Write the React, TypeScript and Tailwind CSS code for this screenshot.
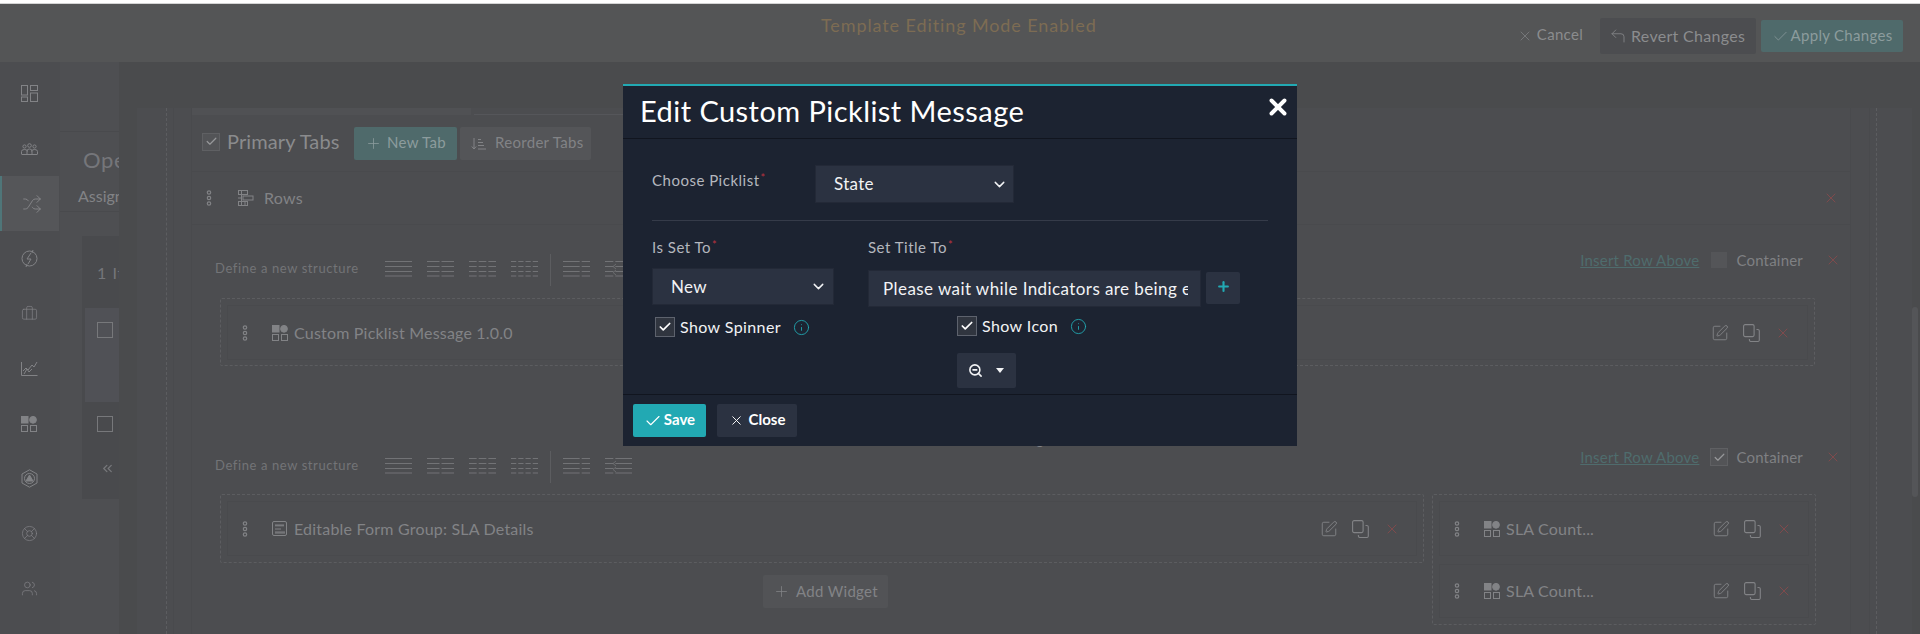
import React from "react";
import { X, Check, Plus, ChevronDown, SquarePen, Info, ZoomOut, ChevronsLeft, Shuffle, LifeBuoy, Users, Briefcase, CornerUpLeft } from "lucide-react";

const RED = "text-[#834a4c]";

const Handle = () => (
  <svg width="6" height="16" viewBox="0 0 6 16" fill="none" stroke="#828386" strokeWidth="1.2" className="shrink-0">
    <circle cx="3" cy="2.5" r="1.7" />
    <circle cx="3" cy="8" r="1.7" />
    <circle cx="3" cy="13.5" r="1.7" />
  </svg>
);

const WidgetIcon = ({ c = "#828386" }: { c?: string }) => (
  <svg width="16" height="16" viewBox="0 0 16 16" fill="none" stroke={c} strokeWidth="1" className="shrink-0">
    <rect x="0.5" y="0.5" width="6.5" height="6.5" fill={c} />
    <circle cx="12" cy="3.8" r="3.4" fill={c} />
    <rect x="0.5" y="9.5" width="6" height="6" />
    <rect x="9.5" y="9.5" width="6" height="6" />
  </svg>
);

const CopyIcon = () => (
  <svg width="17" height="18" viewBox="0 0 17 18" fill="none" stroke="#828386" strokeWidth="1.1" className="shrink-0">
    <rect x="0.6" y="0.6" width="10.5" height="12" rx="1.5" />
    <path d="M13.5 5.5h1.2a1.6 1.6 0 0 1 1.6 1.6v8.8a1.6 1.6 0 0 1-1.6 1.6H8a1.6 1.6 0 0 1-1.6-1.6V15" />
  </svg>
);

const Struct = ({ cols, kind }: { cols: number[]; kind?: "arrowL" }) => {
  const total = 27;
  const gap = 2;
  const sum = cols.reduce((a, b) => a + b, 0);
  const avail = total - gap * (cols.length - 1);
  let x = 0;
  const segs = cols.map((c) => {
    const w = (c / sum) * avail;
    const s = { x, w };
    x += w + gap;
    return s;
  });
  return (
    <svg width="27" height="16" viewBox="0 0 27 16" className="shrink-0">
      {[0.5, 5.5, 10.5, 15].map((y) => (
        <g key={y}>
          {segs.map((s, i) => (
            <rect key={i} x={s.x} y={y - 0.5} width={s.w} height="1" fill="#727376" />
          ))}
        </g>
      ))}
      {kind === "arrowL" && <path d="M11 3l-3 2.5 3 2.5M11 9l-3 2.5 3 2.5" stroke="#727376" fill="none" strokeWidth="0.8" />}
    </svg>
  );
};

const Actions = () => (
  <div className="flex items-center gap-[14px] text-[#828386]">
    <SquarePen size={18} strokeWidth={1.25} />
    <CopyIcon />
    <X size={16} strokeWidth={1.4} className={`ml-[1px] ${RED}`} />
  </div>
);

const GhostCheck = ({ checked }: { checked?: boolean }) =>
  checked ? (
    <div className="w-[18px] h-[18px] bg-[#535457] border border-[#5f6063] flex items-center justify-center shrink-0">
      <Check size={13} strokeWidth={2.2} className="text-[#97989a]" />
    </div>
  ) : (
    <div className="w-[16px] h-[16px] bg-[#545558] shrink-0" />
  );

const DefineRow = ({ checked }: { checked?: boolean }) => (
  <div className="flex items-start h-[32px] ml-[23px] mr-[9px]">
    <span className="mt-[5px] text-[13px] tracking-[0.6px] text-[#737477] w-[170px] whitespace-nowrap leading-[18px]">Define a new structure</span>
    <div className="flex items-center gap-[15px] mt-[7px]">
      <Struct cols={[1]} />
      <Struct cols={[1, 1]} />
      <Struct cols={[1, 1, 1]} />
      <Struct cols={[1, 1, 1, 1]} />
    </div>
    <div className="w-px h-[32px] bg-[#5c5d60] mx-[12px]" />
    <div className="flex items-center gap-[15px] mt-[7px]">
      <Struct cols={[2, 1]} />
      <Struct cols={[1, 2]} kind="arrowL" />
    </div>
    <div className="ml-auto flex items-center -mt-[2px] h-[16px] whitespace-nowrap text-[15px] tracking-[0.2px]">
      <span className="underline text-[#4f6c6d]">Insert Row Above</span>
      <div className="ml-[11px] w-[18px] flex justify-center"><GhostCheck checked={checked} /></div>
      <span className="ml-[8px] text-[#7f8083]">Container</span>
      <X size={16} strokeWidth={1.4} className={`ml-[22px] ${RED}`} />
    </div>
  </div>
);

const WidgetRow = ({ icon, label, h = "h-[55px]" }: { icon: React.ReactNode; label: string; h?: string }) => (
  <div className={`flex items-center ${h} border border-[#494a4d]`}>
    <div className="ml-[14px]"><Handle /></div>
    <div className="ml-[24px]">{icon}</div>
    <span className="ml-[6px] text-[16px] text-[#828386] whitespace-nowrap tracking-[0.2px]">{label}</span>
    <div className="ml-auto mr-[16px]"><Actions /></div>
  </div>
);

const Label = ({ children }: { children: string }) => (
  <span className="block text-[15px] tracking-[0.5px] text-[#b4b7be] leading-[20px] whitespace-nowrap">
    {children}
    <span className="relative -top-[4px] text-[#b8323f] text-[11px] ml-px">*</span>
  </span>
);

const FieldSelect = ({ text, className }: { text: string; className: string }) => (
  <div className={`flex items-center justify-between bg-[#2b3241] border border-[#232937] text-[#f2f3f5] text-[17px] ${className}`}>
    <span className="tracking-[0.3px]">{text}</span>
    <ChevronDown size={17} strokeWidth={2} />
  </div>
);

const ModalCheck = ({ label, className }: { label: string; className: string }) => (
  <div className={`flex items-center ${className}`}>
    <div className="w-[20px] h-[20px] bg-[#30353f] border border-[#5d626d] flex items-center justify-center shrink-0">
      <Check size={14} strokeWidth={3} className="text-white" />
    </div>
    <span className="ml-[5px] text-[16px] tracking-[0.4px] text-[#f2f3f5] whitespace-nowrap">{label}</span>
    <Info size={17} strokeWidth={1.25} className="ml-[12px] text-[#22a9b3]" />
  </div>
);

const IC = "#828386";
const sideIcons: React.ReactNode[] = [
  <svg key="a" width="17" height="17" viewBox="0 0 17 17" fill="none" stroke={IC}><rect x=".5" y=".5" width="6" height="9.5" /><rect x="9.5" y=".5" width="7" height="5" /><rect x=".5" y="12" width="6" height="4.5" /><rect x="9.5" y="8" width="7" height="8.5" /></svg>,
  <svg key="b" width="17" height="12" viewBox="0 0 17 12" fill="none" stroke={IC}><circle cx="8.5" cy="2.5" r="1.8" /><circle cx="3.5" cy="3.5" r="1.6" /><circle cx="13.5" cy="3.5" r="1.6" /><path d="M.5 11V8.5q0-2 3-2t3 2M6 11V8q0-2 2.5-2T11 8v3M10.5 8.5q0-2 3-2t3 2V11M.5 11.5h16" /></svg>,
  <Shuffle key="c" size={20} strokeWidth={1} className="text-[#8b8c8f] ml-[3px]" />,
  <svg key="d" width="17" height="19" viewBox="0 0 17 19" fill="none" stroke={IC}><circle cx="8.5" cy="9.5" r="7.5" /><path d="M10 4L6 10h4l-3 5" /><path d="M12 1l-1 3M5 18l1-3" /></svg>,
  <Briefcase key="e" size={17} strokeWidth={1} className="text-[#828386]" />,
  <svg key="f" width="17" height="14" viewBox="0 0 17 14" fill="none" stroke={IC}><path d="M.5 0v13.5h16M2 9l3-3 2 2 4-5 2 2 3-5M3 12l3-5 2 3 3-3" /></svg>,
  <WidgetIcon key="g" c={IC} />,
  <svg key="h" width="17" height="19" viewBox="0 0 17 19" fill="none" stroke={IC}><path d="M8.5.8L16 5v9l-7.5 4.2L1 14V5z" /><circle cx="8.5" cy="9.5" r="5" /><path d="M8.5 6l3.5 6H5z" fill={IC} /></svg>,
  <LifeBuoy key="i" size={17} strokeWidth={1} className="text-[#828386]" />,
  <Users key="j" size={17} strokeWidth={1} className="text-[#828386]" />,
];

export default function App() {
  return (
    <div className="relative w-full h-[634px] overflow-hidden bg-[#4c4d50] font-['Lato',sans-serif] text-[#828386]">
      <div className="h-[3px] bg-white" />
      <div className="h-px bg-[#d4d4d4]" />

      {/* top bar */}
      <header className="h-[58px] bg-[#545556] flex items-center">
        <span className="ml-[821px] -mt-[16px] text-[18px] tracking-[0.9px] text-[#7d6c53] whitespace-nowrap">Template Editing Mode Enabled</span>
        <div className="ml-auto mr-[17px] mt-[6px] flex items-center text-[15px] tracking-[0.3px] whitespace-nowrap">
          <X size={16} strokeWidth={1.1} />
          <span className="ml-[4px] -mt-[3px] text-[#8b8c8e]">Cancel</span>
          <div className="ml-[17px] h-[36px] w-[156px] bg-[#4c4d50] rounded-[2px] flex items-center pl-[9px]">
            <CornerUpLeft size={18} strokeWidth={1.2} />
            <span className="ml-[4px] text-[#8b8c8e] text-[16px]">Revert Changes</span>
          </div>
          <div className="ml-[5px] h-[32px] w-[142px] bg-[#4f6a6b] rounded-[2px] flex items-center justify-center">
            <Check size={17} strokeWidth={1.1} className="text-[#8c9c9d]" />
            <span className="ml-[2px] -mt-[2px] text-[#8c9c9d]">Apply Changes</span>
          </div>
        </div>
      </header>

      <div className="flex h-[572px]">
        {/* sidebar */}
        <aside className="w-[60px] shrink-0 pt-[4px] flex flex-col bg-[#4c4d50]">
          {sideIcons.map((ic, i) => (
            <div
              key={i}
              className={`h-[55px] flex items-center justify-center shrink-0 ${i === 2 ? "bg-[#555659] border-l-2 border-[#4f7679] mr-px pr-px" : "pr-[2px]"}`}
            >
              {ic}
            </div>
          ))}
        </aside>

        {/* second column */}
        <div className="w-[59px] shrink-0 overflow-hidden bg-[#4e4f52] flex flex-col whitespace-nowrap">
          <div className="h-[70px] border-b border-[#494a4d] shrink-0" />
          <div className="h-[53px] pl-[23px] pt-[14px] text-[22px] leading-[28px] text-[#75767a] shrink-0 tracking-[0.6px]">Ope</div>
          <div className="h-[27px] pl-[18px] text-[16px] text-[#828386] border-b border-[#494a4d] shrink-0 leading-[22px]">Assignments</div>
          <div className="mt-[24px] ml-[22px] h-[263px] bg-[#494a4d] flex flex-col shrink-0">
            <div className="h-[72px] pl-[15px] pt-[27px] text-[16px] leading-[20px] tracking-[1px] text-[#75767a] shrink-0">1 Items</div>
            <div className="h-[94px] ml-[3px] bg-[#505156] pl-[12px] pt-[14px] shrink-0">
              <div className="w-[16px] h-[16px] border border-[#77787b]" />
            </div>
            <div className="h-[59px] pl-[15px] pt-[14px] shrink-0">
              <div className="w-[16px] h-[16px] border border-[#77787b]" />
            </div>
            <ChevronsLeft size={15} strokeWidth={2} className="ml-[18px] text-[#77787b]" />
          </div>
        </div>

        {/* main */}
        <main className="flex-1 min-w-0 bg-[#4a4b4d] pt-[46px] pl-[18px] pr-[8px]">
          <div className="h-full bg-[#4c4d50] pl-[29px] pr-[35px]">
            <div className="h-full border-x border-dashed border-[#5c5d60] pl-[6px] pr-[6px]">
              <div className="h-full border-x border-[#494a4d] ml-0 pl-[17px] pr-[18px]">
                <div className="h-full border-x border-[#494a4d]">
                  {/* tab strip */}
                  <div className="h-[7px] flex">
                    <div className="w-[279px] bg-[#505154]" />
                    <div className="ml-[3px] w-[150px] h-[7px] border-b border-[#55565a]" />
                  </div>

                  {/* primary tabs */}
                  <div className="h-[56px] flex items-center pl-[10px]">
                    <div className="-mt-[3px]"><GhostCheck checked /></div>
                    <span className="ml-[7px] -mt-[5px] w-[127px] text-[20px] text-[#8a8b8d] tracking-[0.1px] whitespace-nowrap">Primary Tabs</span>
                    <div className="mt-[1px] w-[103px] h-[33px] bg-[#4f6a6b] rounded-[2px] flex items-center justify-center text-[15px] text-[#8c9c9d] tracking-[0.3px] whitespace-nowrap">
                      <Plus size={17} strokeWidth={1.1} />
                      <span className="ml-[5px] -mt-[2px]">New Tab</span>
                    </div>
                    <div className="ml-[3px] mt-[1px] w-[131px] h-[33px] bg-[#545558] rounded-[2px] flex items-center pl-[11px] text-[15px] tracking-[0.3px] whitespace-nowrap">
                      <svg width="15" height="12" viewBox="0 0 15 12" fill="none" stroke="#828386" className="shrink-0">
                        <path d="M3 0v11M.8 8.5L3 11l2.2-2.5M7 1.5h3M7 4.5h5M7 7.5h6M7 11h8" />
                      </svg>
                      <span className="ml-[9px] -mt-[2px]">Reorder Tabs</span>
                    </div>
                  </div>

                  {/* rows */}
                  <div className="h-[54px] border-y border-[#494a4d] flex items-center pl-[14px] pr-[11px]">
                    <Handle />
                    <svg width="16" height="16" viewBox="0 0 16 16" fill="none" stroke="#828386" className="ml-[26px] shrink-0">
                      <rect x=".5" y=".5" width="9" height="4" /><rect x="5" y="6" width="10" height="4" /><rect x=".5" y="11.5" width="9" height="4" /><path d="M4 8H0M3.5 1v14M7 12v3" />
                    </svg>
                    <span className="ml-[10px] text-[16px] tracking-[0.3px]">Rows</span>
                    <X size={16} strokeWidth={1.4} className={`ml-auto ${RED}`} />
                  </div>

                  <div className="h-[29px]" />
                  <DefineRow />
                  <div className="h-[12px]" />

                  {/* custom picklist */}
                  <div className="ml-[28px] mr-[35px] h-[68px] border border-dashed border-[#5c5d60] p-[6px] rounded-[2px]">
                    <WidgetRow icon={<WidgetIcon />} label="Custom Picklist Message 1.0.0" />
                  </div>

                  <div className="h-[85px] flex justify-center pt-[61px] ml-[28px] mr-[35px] text-[15px]">
                    <span>Add Widget</span>
                  </div>

                  <DefineRow checked />
                  <div className="h-[11px]" />

                  {/* bottom widgets */}
                  <div className="ml-[28px] mr-[35px] flex gap-[8px]">
                    <div className="w-[1204px] shrink-0 flex flex-col">
                      <div className="h-[69px] border border-dashed border-[#5c5d60] p-[6px] rounded-[2px]">
                        <WidgetRow
                          icon={
                            <svg width="16" height="16" viewBox="0 0 16 16" fill="none" stroke="#828386" className="shrink-0">
                              <rect x=".5" y=".5" width="14" height="14" rx="1.5" /><path d="M3 4h9M3 4.8h9M3 8h6M3 11h10M3 12h10" />
                            </svg>
                          }
                          label="Editable Form Group: SLA Details"
                        />
                      </div>
                      <div className="mt-[12px] ml-[543px] w-[125px] h-[33px] bg-[#525356] rounded-[2px] flex items-center justify-center text-[15px] tracking-[0.3px] whitespace-nowrap">
                        <Plus size={17} strokeWidth={1.1} />
                        <span className="ml-[6px]">Add Widget</span>
                      </div>
                    </div>
                    <div className="w-[384px] shrink-0 h-[131px] border border-dashed border-[#5c5d60] rounded-[2px] p-[6px] flex flex-col gap-[8px]">
                      <WidgetRow icon={<WidgetIcon />} label="SLA Count..." />
                      <WidgetRow icon={<WidgetIcon />} label="SLA Count..." h="h-[54px]" />
                    </div>
                  </div>
                </div>
              </div>
            </div>
          </div>
        </main>
      </div>

      {/* scrollbar */}
      <div className="absolute right-[2px] top-[307px] w-[6px] h-[190px] rounded-[3px] bg-[#545558]" />

      {/* modal */}
      <div className="absolute left-[623px] top-[84px] w-[674px] h-[362px] bg-[#1c2331] border-t-2 border-[#22a9b3] flex flex-col shadow-none">
        <div className="h-[53px] shrink-0 border-b border-[#11151f] flex items-center pl-[17px] pr-[6px] justify-between">
          <span className="text-[29px] tracking-[0.45px] text-white whitespace-nowrap -mt-[2px]">Edit Custom Picklist Message</span>
          <X size={26} strokeWidth={3.6} className="text-white -mt-[10px]" />
        </div>

        <div className="flex-1 px-[29px] pt-[26px] min-h-0">
          <div className="flex">
            <div className="w-[163px] pt-[5px]"><Label>Choose Picklist</Label></div>
            <FieldSelect text="State" className="w-[199px] h-[38px] pl-[18px] pr-[5px]" />
          </div>
          <div className="h-px bg-[#353b49] mt-[17px] w-[616px]" />
          <div className="flex mt-[16px]">
            <div className="w-[216px] shrink-0">
              <Label>Is Set To</Label>
              <FieldSelect text="New" className="mt-[9px] w-[182px] h-[37px] pl-[18px] pr-[6px]" />
              <ModalCheck label="Show Spinner" className="mt-[10px] ml-[3px]" />
            </div>
            <div className="flex-1">
              <Label>Set Title To</Label>
              <div className="mt-[11px] flex items-center">
                <div className="w-[333px] h-[37px] bg-[#2b3241] border border-[#232937] pl-[14px] flex items-center text-[17px] tracking-[0.42px] text-[#f2f3f5] whitespace-nowrap">
                  <span className="block w-[305px] overflow-hidden">Please wait while Indicators are being extracted</span>
                </div>
                <div className="ml-[5px] w-[34px] h-[32px] bg-[#2b3241] rounded-[2px] flex items-center justify-center -mt-[1px]">
                  <Plus size={15} strokeWidth={3.4} className="text-[#22a9b3] -mt-[3px]" />
                </div>
              </div>
              <ModalCheck label="Show Icon" className="mt-[7px] ml-[89px]" />
              <div className="mt-[15px] ml-[89px] w-[59px] h-[35px] bg-[#2b3241] rounded-[2px] flex items-center pl-[11px] text-[#f2f3f5]">
                <ZoomOut size={15} strokeWidth={2.5} />
                <span className="ml-[13px] w-0 h-0 border-x-[4.5px] border-x-transparent border-t-[5px] border-t-[#f2f3f5]" />
              </div>
            </div>
          </div>
        </div>

        <div className="h-[52px] shrink-0 border-t border-[#11151f] flex pl-[10px] pt-[9px] gap-[11px]">
          <div className="w-[73px] h-[33px] bg-[#22a9b3] rounded-[2px] flex items-center justify-center text-white text-[15px] font-bold whitespace-nowrap">
            <Check size={18} strokeWidth={1.5} />
            <span className="ml-[2px] -mt-[3px]">Save</span>
          </div>
          <div className="w-[80px] h-[33px] bg-[#2b3241] rounded-[2px] flex items-center justify-center text-white text-[15px] font-bold whitespace-nowrap">
            <X size={15} strokeWidth={1.5} />
            <span className="ml-[5px] -mt-[3px]">Close</span>
          </div>
        </div>
      </div>
    </div>
  );
}
